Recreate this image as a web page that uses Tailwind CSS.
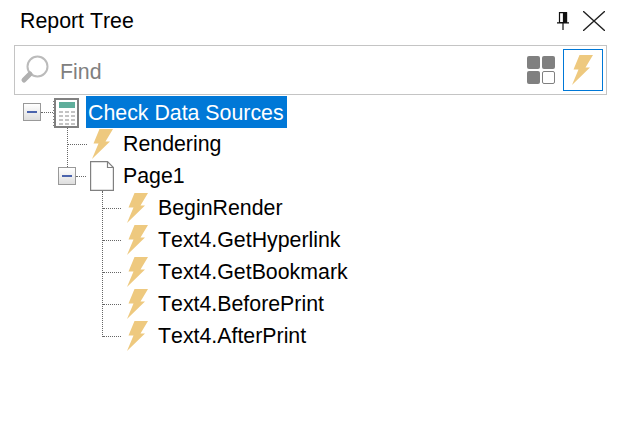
<!DOCTYPE html>
<html lang="en">
<head>
  <meta charset="UTF-8">
  <title>Report Tree</title>
  <script src="https://cdn.jsdelivr.net/npm/@tailwindcss/browser@4"></script>
</head>
<body class="w-[620px] h-[430px] overflow-hidden bg-white text-black font-['Liberation_Sans',Arial,sans-serif] text-[21.33px] [font-kerning:none]">

  <!-- Title bar -->
  <div class="h-[45px] flex items-center pl-5 pr-[15px]">
    <span class="flex-1 leading-[24px] pb-[3px]">Report Tree</span>
    <svg class="mr-[14px] mb-[4px]" width="12" height="18" viewBox="0 0 12 18" fill="none" stroke="#111" stroke-width="1.2">
      <path d="M2.5 .6H9.5V10.5H2.5Z"/><path d="M6.5 1H9.5V10.5H6.5Z" fill="#111"/><path d="M0 10.9H12M6 11V18"/>
    </svg>
    <svg class="mb-[3px]" width="22" height="20" viewBox="0 0 22 20" fill="none" stroke="#222" stroke-width="1.3">
      <path d="M0 0L22 20M22 0L0 20"/>
    </svg>
  </div>

  <!-- Search box -->
  <div class="h-[50px] mb-[1px] ml-[14px] mr-[13px] border border-[#c4c4c4] flex items-center pl-[5px] pr-[3px]">
    <svg width="30" height="30" viewBox="0 0 30 30" fill="none">
      <circle cx="17.5" cy="11.5" r="10" stroke="#bbbbbb" stroke-width="2"/>
      <path d="M10 19L4 25" stroke="#b0b0b0" stroke-width="5" stroke-linecap="round"/>
    </svg>
    <span class="flex-1 ml-[10px] pt-[6px] text-[#808080]">Find</span>
    <div class="grid grid-cols-[13px_13px] gap-[2px] mr-[8px]">
      <div class="h-[13px] rounded-[2px] bg-[#808080]"></div>
      <div class="h-[13px] rounded-[2px] bg-[#808080]"></div>
      <div class="h-[13px] rounded-[2px] bg-[#808080]"></div>
      <div class="h-[13px] rounded-[2px] border border-[#808080] bg-white"></div>
    </div>
    <div class="w-[40px] h-[42px] border border-[#0078d7] flex items-center justify-center">
      <svg width="22" height="30" viewBox="0 0 22 30"><path d="M7.5 0H21L13.5 12.5H18L0 30L6.5 14.5H1.5Z" fill="#eec97f"/></svg>
    </div>
  </div>

  <!-- Tree -->
  <div class="relative">
    <!-- vertical dotted connectors -->
    <div class="absolute left-[67px] top-[32px] h-[39px] border-l border-dotted border-[#666]"></div>
    <div class="absolute left-[102px] top-[95px] h-[146px] border-l border-dotted border-[#666]"></div>

    <!-- Check Data Sources -->
    <div class="h-[32px] flex items-center pl-[23px]">
      <div class="w-[18px] h-[18px] border border-[#999] bg-gradient-to-b from-white to-[#dedede] flex items-center justify-center">
        <div class="w-[10px] h-[2px] bg-[#4a63ac]"></div>
      </div>
      <div class="w-[12px] border-t border-dotted border-[#666]"></div>
      <svg class="mt-[2px]" width="26" height="30" viewBox="0 0 26 30" fill="none">
        <rect x="2" y="1" width="23" height="28" fill="#fff" stroke="#808080" stroke-width="2"/>
        <path d="M0 3H1V4H0ZM0 6H1V7H0ZM0 9H1V10H0ZM0 12H1V13H0ZM0 15H1V16H0ZM0 18H1V19H0ZM0 21H1V22H0ZM0 24H1V25H0ZM0 27H1V28H0Z" fill="#808080"/>
        <rect x="6" y="4" width="16" height="6" fill="#5fae9b"/>
        <path d="M6 13H10V15H6ZM12 13H16V15H12ZM18 13H22V15H18ZM6 17H10V19H6ZM12 17H16V19H12ZM18 17H22V19H18ZM6 21H10V23H6ZM12 21H16V23H12ZM18 21H22V23H18ZM6 25H10V27H6ZM12 25H16V27H12ZM18 25H22V27H18Z" fill="#c4c4c4"/>
      </svg>
      <span class="ml-[7px] w-[201px] h-[32px] pl-[2px] pt-[1px] bg-[#0078d7] text-white leading-[32px] whitespace-nowrap">Check Data Sources</span>
    </div>

    <!-- Rendering -->
    <div class="h-[32px] flex items-center pl-[68px]">
      <div class="w-[19px] border-t border-dotted border-[#666]"></div>
      <svg class="ml-[5px] -mt-[1px]" width="22" height="30" viewBox="0 0 22 30"><path d="M7.5 0H21L13.5 12.5H18L0 30L6.5 14.5H1.5Z" fill="#eec97f"/></svg>
      <span class="ml-[9px] pt-[2px]">Rendering</span>
    </div>

    <!-- Page1 -->
    <div class="h-[32px] flex items-center pl-[58px]">
      <div class="w-[18px] h-[18px] border border-[#999] bg-gradient-to-b from-white to-[#dedede] flex items-center justify-center">
        <div class="w-[10px] h-[2px] bg-[#4a63ac]"></div>
      </div>
      <div class="w-[10px] border-t border-dotted border-[#666]"></div>
      <svg class="ml-[4px]" width="24" height="30" viewBox="0 0 24 30" fill="none" stroke="#808080" stroke-width="1.2">
        <path d="M.6 .6H17.5L23.4 6.5V29.4H.6Z" fill="#fff"/><path d="M17.5 .6V6.5H23.4"/>
      </svg>
      <span class="ml-[9px] pt-[2px]">Page1</span>
    </div>

    <!-- Page1 children -->
    <div class="h-[32px] flex items-center pl-[103px]">
      <div class="w-[18px] border-t border-dotted border-[#666]"></div>
      <svg class="ml-[6px]" width="22" height="30" viewBox="0 0 22 30"><path d="M7.5 0H21L13.5 12.5H18L0 30L6.5 14.5H1.5Z" fill="#eec97f"/></svg>
      <span class="ml-[9px] pt-[2px]">BeginRender</span>
    </div>
    <div class="h-[32px] flex items-center pl-[103px]">
      <div class="w-[18px] border-t border-dotted border-[#666]"></div>
      <svg class="ml-[6px]" width="22" height="30" viewBox="0 0 22 30"><path d="M7.5 0H21L13.5 12.5H18L0 30L6.5 14.5H1.5Z" fill="#eec97f"/></svg>
      <span class="ml-[9px] pt-[2px]">Text4.GetHyperlink</span>
    </div>
    <div class="h-[32px] flex items-center pl-[103px]">
      <div class="w-[18px] border-t border-dotted border-[#666]"></div>
      <svg class="ml-[6px]" width="22" height="30" viewBox="0 0 22 30"><path d="M7.5 0H21L13.5 12.5H18L0 30L6.5 14.5H1.5Z" fill="#eec97f"/></svg>
      <span class="ml-[9px] pt-[2px]">Text4.GetBookmark</span>
    </div>
    <div class="h-[32px] flex items-center pl-[103px]">
      <div class="w-[18px] border-t border-dotted border-[#666]"></div>
      <svg class="ml-[6px]" width="22" height="30" viewBox="0 0 22 30"><path d="M7.5 0H21L13.5 12.5H18L0 30L6.5 14.5H1.5Z" fill="#eec97f"/></svg>
      <span class="ml-[9px] pt-[2px]">Text4.BeforePrint</span>
    </div>
    <div class="h-[32px] flex items-center pl-[103px]">
      <div class="w-[18px] border-t border-dotted border-[#666]"></div>
      <svg class="ml-[6px]" width="22" height="30" viewBox="0 0 22 30"><path d="M7.5 0H21L13.5 12.5H18L0 30L6.5 14.5H1.5Z" fill="#eec97f"/></svg>
      <span class="ml-[9px] pt-[2px]">Text4.AfterPrint</span>
    </div>
  </div>
</body>
</html>
